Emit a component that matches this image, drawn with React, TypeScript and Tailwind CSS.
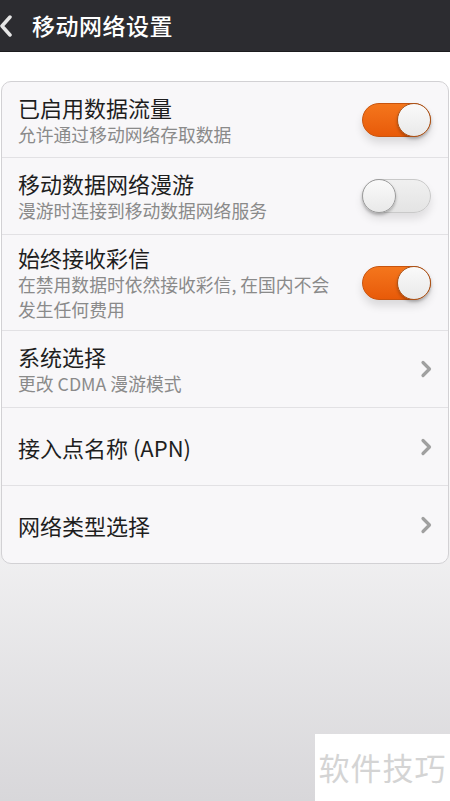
import React from "react";

const font = { fontFamily: '"Noto Sans CJK SC", "Noto Sans", sans-serif' };

type Row = {
  title: string;
  desc?: string;
  toggle?: boolean;
  h: string;
};

const rows: Row[] = [
  { title: "已启用数据流量", desc: "允许通过移动网络存取数据", toggle: true, h: "h-[76px]" },
  { title: "移动数据网络漫游", desc: "漫游时连接到移动数据网络服务", toggle: false, h: "h-[77px]" },
  {
    title: "始终接收彩信",
    desc: "在禁用数据时依然接收彩信, 在国内不会发生任何费用",
    toggle: true,
    h: "h-[96px]",
  },
  { title: "系统选择", desc: "更改 CDMA 漫游模式", h: "h-[77px]" },
  { title: "接入点名称 (APN)", h: "h-[78px]" },
  { title: "网络类型选择", h: "h-[77px]" },
];

const Toggle = ({ on }: { on: boolean }) =>
  on ? (
    <div className="relative w-[69px] h-[34px] rounded-full bg-gradient-to-b from-[#f4761c] to-[#e85a08] border border-[#c8540e] shadow-[0_6px_8px_rgba(0,0,0,0.12)]">
      <div className="absolute right-[-1px] top-[-1px] w-[34px] h-[34px] rounded-full bg-gradient-to-b from-[#fafafa] to-[#e9e9e9] border border-[#a8541c] shadow-[0_2px_3px_rgba(0,0,0,0.25)]" />
    </div>
  ) : (
    <div className="relative w-[69px] h-[34px] rounded-full bg-gradient-to-b from-[#f0f0f0] to-[#e4e4e4] border border-[#c9c9c9] shadow-[0_6px_8px_rgba(0,0,0,0.1)]">
      <div className="absolute left-[-1px] top-[-1px] w-[34px] h-[34px] rounded-full bg-gradient-to-b from-[#fafafa] to-[#e9e9e9] border border-[#9c9c9c] shadow-[0_2px_3px_rgba(0,0,0,0.25)]" />
    </div>
  );

const Chevron = () => (
  <svg width="12" height="18" viewBox="0 0 12 18" className="mr-[-1px]">
    <path d="M3 2.5 L9.5 9 L3 15.5" fill="none" stroke="#a0a0a0" strokeWidth="3.2" strokeLinecap="round" strokeLinejoin="round" />
  </svg>
);

export default function App() {
  return (
    <div className="w-[450px] h-[801px] relative overflow-hidden bg-gradient-to-b from-white via-white to-[#d8d7da]" style={font}>
      {/* header */}
      <div className="h-[52px] bg-[#2c2c30] flex items-center border-b border-[#1c1c1e]">
        <svg width="14" height="24" viewBox="0 0 14 24" className="ml-[-1px]">
          <path d="M11 3 L3 12 L11 21" fill="none" stroke="#e6e6e6" strokeWidth="3.5" strokeLinecap="round" strokeLinejoin="round" />
        </svg>
        <span className="ml-[19px] text-[23px] text-white font-medium tracking-[0.5px]">移动网络设置</span>
      </div>

      {/* card */}
      <div className="mt-[29px] mx-[1px] bg-[#f8f7f9] border border-[#d2d1d4] rounded-[10px]">
        {rows.map((r, i) => (
          <div
            key={i}
            className={`${r.h} flex items-center pl-[16px] pr-[17px] ${i < rows.length - 1 ? "border-b border-[#e2e1e4]" : ""}`}
          >
            <div className="flex-1 min-w-0">
              <div className="text-[22px] leading-[28px] text-[#1e1e1e]">{r.title}</div>
              {r.desc && (
                <div className="mt-[1px] text-[17.8px] leading-[25px] text-[#8a8a8a] w-[322px]">{r.desc}</div>
              )}
            </div>
            {r.toggle !== undefined ? <Toggle on={r.toggle} /> : <Chevron />}
          </div>
        ))}
      </div>

      {/* watermark */}
      <div className="absolute right-0 bottom-0 w-[135px] h-[67px] bg-white flex items-center justify-center">
        <span className="text-[31px] text-[#d4d4d4] tracking-[1px]">软件技巧</span>
      </div>
    </div>
  );
}
